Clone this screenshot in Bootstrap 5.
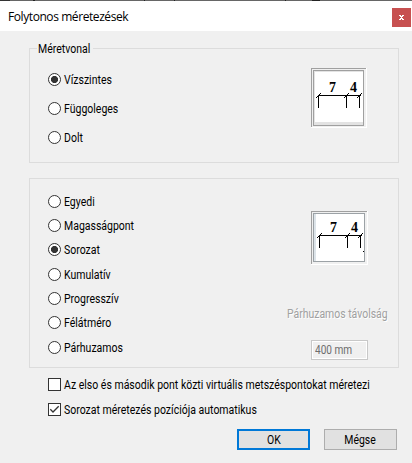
<!DOCTYPE html>
<html lang="hu">
<head>
<meta charset="utf-8">
<meta name="viewport" content="width=device-width, initial-scale=1">
<title>Folytonos méretezések</title>
<link href="https://cdn.jsdelivr.net/npm/bootstrap@5.3.0/dist/css/bootstrap.min.css" rel="stylesheet">
<style>
body{width:412px;height:463px;overflow:hidden;background:#f0f0f0;color:#000;font:12px/14px Roboto,"Liberation Sans",sans-serif}
.edge{height:1px;background:linear-gradient(90deg,#333 0 10px,#666 10px 33px,#222 33px 35px,#666 35px 144px,#222 144px 145px,#666 145px 174px,#222 174px 175px,#666 175px 285px,#222 285px 286px,#666 286px 312px,#222 312px 320px,#666 320px)}
.titlebar{height:30px;padding-left:8px;padding-right:1px}
.caption{font:12px/16px "Open Sans","Noto Sans",sans-serif;letter-spacing:-.42px;white-space:nowrap}
.close-x{width:19px;height:19px;margin-top:7px;background:#c75050;border:0;padding:0;display:block}
.group{margin-left:29px;width:370px;border:1px solid #dcdcdc;padding:0 30px 0 18px}
.group-a{height:115px;margin-top:17px}
.group-b{height:190px;margin-top:15px}
.narrow{display:inline-block;transform:scaleX(.87);transform-origin:0 50%;white-space:nowrap}
.opt .narrow,.legend-text .narrow{transform:translateY(1px) scaleX(.875)}
.legend-text{height:14px;margin:-8px 0 0 -11px;padding:0 0 0 1px;background:#f0f0f0;width:56px;white-space:nowrap}
.opt{display:flex;align-items:center;height:13px;gap:3px;white-space:nowrap;line-height:13px}
.opt input{appearance:none;flex:none;width:13px;height:13px;margin:0;border:1px solid #333;background:#fff}
.opt input[type=radio]{border-radius:50%}
.opt input[type=radio]:checked{background:radial-gradient(circle,#333 0 3.2px,#fff 3.9px)}
.opt input[type=checkbox]:checked{background:#fff url("data:image/svg+xml,%3Csvg xmlns='http://www.w3.org/2000/svg' viewBox='0 0 11 11'%3E%3Cpath d='M1.3 5.3 4 8 9.7 2.3' fill='none' stroke='%23333' stroke-width='1.3'/%3E%3C/svg%3E")}
.group-a .opts{padding-top:18px;gap:16px}
.group-b .opts{padding-top:16px;gap:11px}
.group-b .opt:nth-child(4),.group-b .opt:nth-child(7){margin-top:1px}
.preview{display:block;flex:none}
.preview text{font:bold 14px "Liberation Serif",serif}
.preview-a{margin:13px 1px 0 0}
.preview-b{margin:32px 0 0 24px}
.side{width:101px;margin-right:-20px;flex:none}
.distance{height:14px;margin-top:42px;color:#a0a0a0;text-shadow:1px 1px #fff}
.amount{width:57px;height:20px;margin:19px 0 0 24px;border:1px solid #c8c8c8;box-shadow:inset 0 0 0 1px #fff;color:#6d6d6d;padding:2px 3px}
.amount .narrow{transform:scaleX(.84)}
.checks{padding:10px 0 0 48px;gap:12px}
.dlg-btn{width:73px;height:21px;padding:0;border-radius:0;font:inherit;color:#000;background:#e1e1e1;border:1px solid #adadad}
.dlg-btn .narrow{transform-origin:50% 50%}
.dlg-btn.default{border:2px solid #0078d7}
.actions{margin:13px 15px 0 0;gap:14px}
</style>
<script src="https://cdn.jsdelivr.net/npm/bootstrap@5.3.0/dist/js/bootstrap.bundle.min.js"></script>
</head>
<body>
<div class="edge"></div>
<header class="titlebar bg-white d-flex justify-content-between align-items-start">
  <span class="caption mt-2">Folytonos méretezések</span>
  <button class="close-x" aria-label="Bezárás"><svg class="d-block" width="19" height="19" shape-rendering="crispEdges"><path d="M7 7h2v1h1v-1h2v1h-1v1h-1v1h1v1h1v1h-2v-1h-1v1h-2v-1h1v-1h1v-1h-1v-1h-1z" fill="#fff"/></svg></button>
</header>
<main>
<section class="group group-a">
  <div class="legend-text"><span class="narrow">Méretvonal</span></div>
  <div class="d-flex justify-content-between">
    <div class="opts d-flex flex-column">
      <label class="opt"><input type="radio" name="line" checked><span class="narrow">Vízszintes</span></label>
      <label class="opt"><input type="radio" name="line"><span class="narrow">Függoleges</span></label>
      <label class="opt"><input type="radio" name="line"><span class="narrow">Dolt</span></label>
    </div>
    <svg class="preview preview-a" width="56" height="60" shape-rendering="crispEdges">
      <path d="M0 0h56v60H0z" fill="#fff"/><path d="M0 0h55v1H1v58H0z" fill="#a0a0a0"/><path d="M1 1h54v58H1z" fill="#f0f0f0"/>
      <path d="M2.5 2.5h50v55h-50z" fill="#e3e3e3" stroke="#a0a0a0"/><path d="M4 4h48v50H4z" fill="#fff"/>
      <path d="M7 27.5h43M7.500 27v13M35.500 27v13M48.500 27v13M5 29.500h1M6 28.500h1M8 26.500h1M9 25.500h1M33 29.500h1M34 28.500h1M36 26.500h1M37 25.500h1M46 29.500h1M47 28.500h1M49 26.500h1M50 25.500h1" stroke="#000"/>
      <text x="18" y="24">7</text><text x="39" y="24">4</text>
    </svg>
  </div>
</section>
<section class="group group-b d-flex justify-content-between">
    <div class="opts d-flex flex-column">
      <label class="opt"><input type="radio" name="kind"><span class="narrow">Egyedi</span></label>
      <label class="opt"><input type="radio" name="kind"><span class="narrow">Magasságpont</span></label>
      <label class="opt"><input type="radio" name="kind" checked><span class="narrow">Sorozat</span></label>
      <label class="opt"><input type="radio" name="kind"><span class="narrow">Kumulatív</span></label>
      <label class="opt"><input type="radio" name="kind"><span class="narrow">Progresszív</span></label>
      <label class="opt"><input type="radio" name="kind"><span class="narrow">Félátméro</span></label>
      <label class="opt"><input type="radio" name="kind"><span class="narrow">Párhuzamos</span></label>
    </div>
    <div class="side d-flex flex-column">
    <svg class="preview preview-b" width="57" height="54" shape-rendering="crispEdges">
      <path d="M0 0h57v54H0z" fill="#fff"/><path d="M0 0h56v1H1v52H0z" fill="#a0a0a0"/><path d="M1 1h55v52H1z" fill="#f0f0f0"/>
      <path d="M2.5 2.5h51v48h-51z" fill="#fff" stroke="#9ca2a6"/><path d="M3 3h2v47H3z" fill="#dce3e8"/>
      <path d="M8 24.500h43M8.500 24v13M36.500 24v13M49.500 24v13M6 26.500h1M7 25.500h1M9 23.500h1M10 22.500h1M34 26.500h1M35 25.500h1M37 23.500h1M38 22.500h1M47 26.500h1M48 25.500h1M50 23.500h1M51 22.500h1M52 40.500h1" stroke="#000"/>
      <text x="19" y="21">7</text><text x="40" y="21">4</text>
    </svg>
    <div class="distance"><span class="narrow">Párhuzamos távolság</span></div>
    <div class="amount"><span class="narrow">400 mm</span></div>
    </div>
</section>
<div class="checks d-flex flex-column">
  <label class="opt"><input type="checkbox"><span class="narrow">Az elso és második pont közti virtuális metszéspontokat méretezi</span></label>
  <label class="opt"><input type="checkbox" checked><span class="narrow">Sorozat méretezés pozíciója automatikus</span></label>
</div>
<div class="actions d-flex justify-content-end">
  <button class="dlg-btn default"><span class="narrow">OK</span></button>
  <button class="dlg-btn"><span class="narrow">Mégse</span></button>
</div>
</main>
</body>
</html>
